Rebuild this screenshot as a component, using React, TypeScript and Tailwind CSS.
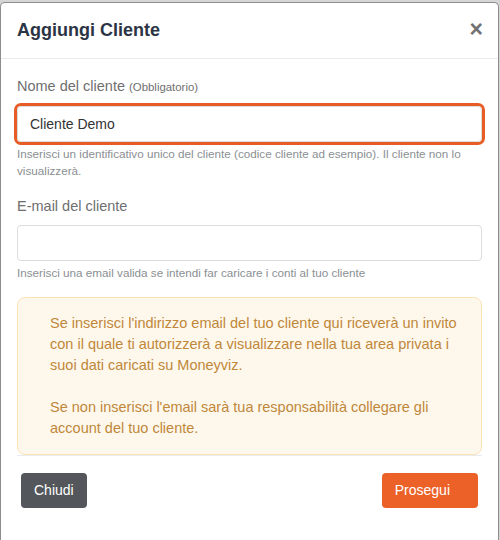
import { useState } from 'react'

export default function App() {
  const [name, setName] = useState('Cliente Demo')
  const [email, setEmail] = useState('')

  return (
    <div
      className="w-[500px] h-[540px] overflow-hidden bg-[#d6d6d6] pt-[2px] pr-px"
      style={{ fontFamily: '"Liberation Sans", Arial, sans-serif' }}
    >
      <div className="h-[600px] w-[499px] bg-white border-x border-t border-[#8d8d8d] rounded-t-[5px]">
        {/* header */}
        <div className="h-[56px] flex items-center justify-between pl-4 pr-[15px] border-b border-[#e9ecef]">
          <h5 className="text-[18px] font-bold text-[#2b3444]">Aggiungi Cliente</h5>
          <button className="text-[23px] leading-none font-bold text-[#727272] pb-[3px]">×</button>
        </div>

        {/* body */}
        <div className="px-4 pt-[17px]">
          <label className="block text-[14.5px] leading-[21px] text-[#6f6f6f]">
            Nome del cliente <span className="text-[11.4px]">(Obbligatorio)</span>
          </label>
          <input
            value={name}
            onChange={(e) => setName(e.target.value)}
            className="mt-2 block w-full h-[36px] px-3 rounded-[4px] border border-[#dcdcdc] text-[14px] text-[#333] outline-none ring-3 ring-[#e65c24]"
          />
          <p className="mt-[3px] text-[11.7px] leading-[17px] text-[#8b8f93]">
            Inserisci un identificativo unico del cliente (codice cliente ad esempio). Il cliente non lo visualizzerà.
          </p>

          <label className="mt-[17px] block text-[14.5px] leading-[21px] text-[#6f6f6f]">E-mail del cliente</label>
          <input
            value={email}
            onChange={(e) => setEmail(e.target.value)}
            className="mt-2 block w-full h-[36px] px-3 rounded-[4px] border border-[#dcdcdc] text-[14px] text-[#333] outline-none"
          />
          <p className="mt-[3px] text-[11.7px] leading-[17px] text-[#8b8f93]">
            Inserisci una email valida se intendi far caricare i conti al tuo cliente
          </p>

          <div className="mt-[16px] rounded-[8px] border border-[#fbe3b6] bg-[#fef8ec] pl-[32px] pr-4 py-[15px] text-[14.5px] leading-[21px] text-[#c0873a]">
            Se inserisci l'indirizzo email del tuo cliente qui riceverà un invito con il quale ti autorizzerà a visualizzare nella tua area privata i suoi dati caricati su Moneyviz.
            <br />
            <br />
            Se non inserisci l'email sarà tua responsabilità collegare gli account del tuo cliente.
          </div>
        </div>

        {/* footer */}
        <div className="mx-4 border-t border-[#e9ecef] px-1 pt-[17px] flex justify-between">
          <button className="h-[35px] px-[13px] rounded-[4px] bg-[#53575b] text-white text-[14px]">Chiudi</button>
          <button className="h-[35px] pl-[13px] pr-[28px] rounded-[4px] bg-[#eb6128] text-white text-[14px]">Prosegui</button>
        </div>
      </div>
    </div>
  )
}
